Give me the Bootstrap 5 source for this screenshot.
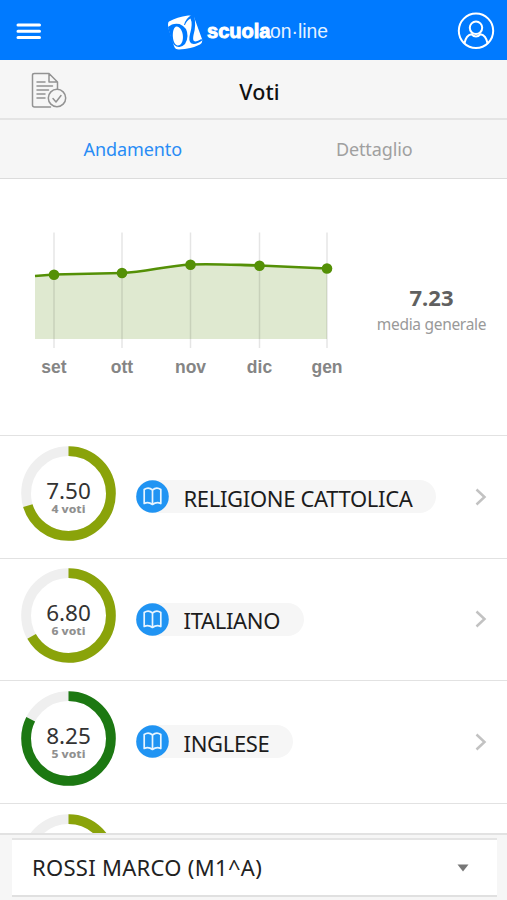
<!DOCTYPE html>
<html lang="it">
<head>
<meta charset="utf-8">
<meta name="viewport" content="width=device-width, initial-scale=1">
<title>Voti</title>
<link href="https://cdn.jsdelivr.net/npm/bootstrap@5.3.0/dist/css/bootstrap.min.css" rel="stylesheet">
<style>
  body { font-family: "Noto Sans", "Open Sans", sans-serif; color: #222; }
  svg { display: block; flex: none; }
  .app { height: 900px; }
  .topbar { height: 60px; background: #007aff; padding: 0 12px 0 16px; }
  .titlebar { height: 60px; background: #f6f6f6; border-bottom: 2px solid #e4e4e4; padding: 0 19px 0 31px; }
  .titlebar h1 { font-size: 21.5px; font-weight: 500; color: #111; letter-spacing: .1px; padding-top: 5px; }
  .side { width: 36px; }
  .tabs { height: 59px; background: #f6f6f6; border-bottom: 1px solid #dcdcdc; padding: 0 12px; font-size: 18px; letter-spacing: -.1px; }
  .tabs .nav-link { color: #a0a0a0; padding: 1px 0 0; }
  .tabs .nav-link.active { color: #288cf5; }
  .trend { height: 256px; padding-left: 20px; }
  .trend text { font: bold 17.5px "Liberation Sans", Arial, sans-serif; fill: #858585; text-anchor: middle; }
  .average { width: 151px; padding-top: 5px; }
  .average-value { font-size: 22px; font-weight: 700; line-height: 28px; color: #606060; }
  .average-label { font-size: 15.5px; line-height: 26px; color: #999; letter-spacing: -.3px; }
  .subject { height: 122.6px; border-top: 1.5px solid #e2e2e2; padding: 0 20px 0 20.5px; }
  .ring { margin-right: 20px; margin-top: -7px; }
  .ring .grade { font: 22.5px "Noto Sans", sans-serif; fill: #333; text-anchor: middle; }
  .ring .votes { font: 800 11px "Noto Sans", sans-serif; fill: #909090; text-anchor: middle; }
  .chip { height: 33px; background: #f6f6f6; padding-right: 24px; font-size: 22px; line-height: 33px; color: #1c1c1c; letter-spacing: -.33px; }
  .chip span { margin-left: 15px; padding-top: 3px; }
  .footer-select { height: 67px; background: #f6f6f6; border-top: 2px solid #e2e2e2; padding: 3px 10.5px 4px 12px; }
  .student { height: 59px; background: #fff; border-top: 2px solid #e4e4e4; border-bottom: 2px solid #e0e0e0; padding: 0 28px 0 20px; font-size: 22px; letter-spacing: .3px; }
</style>
</head>
<body>
<div class="app d-flex flex-column overflow-hidden bg-white">
  <header class="topbar d-flex align-items-center justify-content-between flex-shrink-0">
    <svg width="26" height="20" viewBox="0 0 26 20" stroke="#fff" stroke-width="3" stroke-linecap="round"><path d="M2 5H23.500M2 11.200H23.500M2 17.400H23.500"/></svg>
    <svg width="164" height="40" viewBox="0 0 164 40">
      <path d="M1 11.500Q9 7 20 5.500Q24 5 26 7L34 29Q35 33 32 34.500Q23 39 11 39.500Q7 39.500 6 36L1 20Q-1 13 1 11.500Z" fill="#fff"/>
      <path fill-rule="evenodd" d="M0 17Q5 12.500 11.500 14Q19.500 17 19.500 26Q19 35.500 11.500 37Q6 37.500 3.500 30ZM8.500 16.500C3.500 17 3.500 34 9.500 35.500C17.500 36 16.500 17 8.500 16.500Z" fill="#007aff"/>
      <path d="M16 15Q17.500 8.500 23.500 5H26Q28.500 15 25.500 25Q24.500 30 26 31Q28 32.500 33.500 29L34.200 30.500Q28 35 23.500 33.500Q20 31.500 22 24Q25 14 22.500 8.500Q18.500 10.500 17 15Z" fill="#007aff"/>
      <text x="39" y="28" textLength="63.500" lengthAdjust="spacingAndGlyphs" font-family="Liberation Sans, Arial, sans-serif" font-size="19.500" font-weight="700" fill="#fff" stroke="#fff" stroke-width=".9">scuola</text>
      <text x="102" y="28" textLength="58" lengthAdjust="spacingAndGlyphs" font-family="Liberation Sans, Arial, sans-serif" font-size="20.500" fill="#e5f2ff">on·line</text>
    </svg>
    <svg width="38" height="38" viewBox="0 0 38 38" fill="none" stroke="#fff" stroke-width="2"><g transform="translate(0 .8)"><circle cx="19" cy="19" r="17.200"/><circle cx="19" cy="16" r="6.200"/><path d="M7.500 31.500Q9 23.500 14.500 22.500Q19 27 23.500 22.500Q29 23.500 30.500 31.500"/></g></svg>
  </header>
  <div class="titlebar d-flex align-items-center justify-content-between flex-shrink-0">
    <svg class="side" height="38" viewBox="0 -1 36 38" fill="none" stroke="#939393" stroke-width="1.500" stroke-linejoin="round" stroke-linecap="round"><path d="M19.500 36H3.500Q1.500 36 1.500 34V4Q1.500 2.500 3.500 2.500H18L26.500 11V18M18 2.500V11H26.500M6 11H14M6 15H21.500M6 19H17.500M6 23H14M6 27H14"/><circle cx="26" cy="27" r="8.700"/><path d="M22 27.500L25 31L30 24.500"/></svg>
    <h1 class="mb-0">Voti</h1>
    <span class="side"></span>
  </div>
  <nav class="tabs nav nav-fill flex-nowrap align-items-center flex-shrink-0">
    <div class="col-6 text-center"><a class="nav-link active" href="#">Andamento</a></div>
    <div class="col-6 text-center"><a class="nav-link" href="#">Dettaglio</a></div>
  </nav>
  <section class="trend d-flex align-items-center flex-shrink-0">
    <svg width="336" height="170" viewBox="20 222 336 170">
      <path d="M35 276L54 274.500L122 273C145 272 166 266 190.500 264.500C214 263.500 237 265 259.500 265.500L327 268.500V339H35Z" fill="#dfe9d0"/>
      <path d="M54 232.500V348M122 232.500V348M190.500 232.500V348M259.500 232.500V348M327 232.500V348" stroke="#000" stroke-opacity=".1" stroke-width="1.500"/>
      <path d="M35 276L54 274.500L122 273C145 272 166 266 190.500 264.500C214 263.500 237 265 259.500 265.500L327 268.500" fill="none" stroke="#549006" stroke-width="2.600"/>
      <g fill="#549006"><circle cx="54" cy="274.700" r="5.300"/><circle cx="122" cy="273" r="5.300"/><circle cx="190.500" cy="264.700" r="5.300"/><circle cx="259.500" cy="265.700" r="5.300"/><circle cx="327" cy="268.500" r="5.300"/></g>
      <text x="54" y="373">set</text><text x="122" y="373">ott</text><text x="190.500" y="373">nov</text><text x="259.500" y="373">dic</text><text x="327" y="373">gen</text>
    </svg>
    <div class="average text-center">
      <div class="average-value">7.23</div>
      <div class="average-label">media generale</div>
    </div>
  </section>
  <main class="flex-grow-1 overflow-hidden">
    <div class="subject d-flex align-items-center">
      <svg class="ring" width="95" height="95" viewBox="0 0 95 95"><g fill="none" stroke-width="9.800" transform="rotate(-90 47.500 47.500)"><circle cx="47.500" cy="47.500" r="42.400" stroke="#efefef"/><circle cx="47.500" cy="47.500" r="42.400" stroke="#8aa30a" pathLength="100" stroke-dasharray="70.400 100"/></g><text class="grade" x="47.500" y="53">7.50</text><text class="votes" x="47.500" y="67" textLength="34" lengthAdjust="spacingAndGlyphs">4 voti</text></svg>
      <div class="chip rounded-pill d-flex align-items-center"><svg width="33" height="33" viewBox="0 0 33 33"><circle cx="16.500" cy="16.500" r="16.300" fill="#2094f3"/><path d="M16.500 10Q12.500 6.500 8.200 9.500V23.500Q12.500 21.500 16.500 24.500Q20.500 21.500 24.800 23.500V9.500Q20.500 6.500 16.500 10V24" fill="none" stroke="#e8f5ff" stroke-width="1.700" stroke-linejoin="round"/></svg><span>RELIGIONE CATTOLICA</span></div>
      <svg class="ms-auto" width="12" height="18" viewBox="0 0 12 18" fill="none" stroke="#c2c2c2" stroke-width="2.500"><path d="M1.500 1.500L9.500 9L1.500 16.500"/></svg>
    </div>
    <div class="subject d-flex align-items-center">
      <svg class="ring" width="95" height="95" viewBox="0 0 95 95"><g fill="none" stroke-width="9.800" transform="rotate(-90 47.500 47.500)"><circle cx="47.500" cy="47.500" r="42.400" stroke="#efefef"/><circle cx="47.500" cy="47.500" r="42.400" stroke="#8aa30a" pathLength="100" stroke-dasharray="66.800 100"/></g><text class="grade" x="47.500" y="53">6.80</text><text class="votes" x="47.500" y="67" textLength="34" lengthAdjust="spacingAndGlyphs">6 voti</text></svg>
      <div class="chip rounded-pill d-flex align-items-center"><svg width="33" height="33" viewBox="0 0 33 33"><circle cx="16.500" cy="16.500" r="16.300" fill="#2094f3"/><path d="M16.500 10Q12.500 6.500 8.200 9.500V23.500Q12.500 21.500 16.500 24.500Q20.500 21.500 24.800 23.500V9.500Q20.500 6.500 16.500 10V24" fill="none" stroke="#e8f5ff" stroke-width="1.700" stroke-linejoin="round"/></svg><span>ITALIANO</span></div>
      <svg class="ms-auto" width="12" height="18" viewBox="0 0 12 18" fill="none" stroke="#c2c2c2" stroke-width="2.500"><path d="M1.500 1.500L9.500 9L1.500 16.500"/></svg>
    </div>
    <div class="subject d-flex align-items-center">
      <svg class="ring" width="95" height="95" viewBox="0 0 95 95"><g fill="none" stroke-width="9.800" transform="rotate(-90 47.500 47.500)"><circle cx="47.500" cy="47.500" r="42.400" stroke="#efefef"/><circle cx="47.500" cy="47.500" r="42.400" stroke="#1c7812" pathLength="100" stroke-dasharray="82.500 100"/></g><text class="grade" x="47.500" y="53">8.25</text><text class="votes" x="47.500" y="67" textLength="34" lengthAdjust="spacingAndGlyphs">5 voti</text></svg>
      <div class="chip rounded-pill d-flex align-items-center"><svg width="33" height="33" viewBox="0 0 33 33"><circle cx="16.500" cy="16.500" r="16.300" fill="#2094f3"/><path d="M16.500 10Q12.500 6.500 8.200 9.500V23.500Q12.500 21.500 16.500 24.500Q20.500 21.500 24.800 23.500V9.500Q20.500 6.500 16.500 10V24" fill="none" stroke="#e8f5ff" stroke-width="1.700" stroke-linejoin="round"/></svg><span>INGLESE</span></div>
      <svg class="ms-auto" width="12" height="18" viewBox="0 0 12 18" fill="none" stroke="#c2c2c2" stroke-width="2.500"><path d="M1.500 1.500L9.500 9L1.500 16.500"/></svg>
    </div>
    <div class="subject d-flex align-items-center">
      <svg class="ring" width="95" height="95" viewBox="0 0 95 95"><g fill="none" stroke-width="9.800" transform="rotate(-90 47.500 47.500)"><circle cx="47.500" cy="47.500" r="42.400" stroke="#efefef"/><circle cx="47.500" cy="47.500" r="42.400" stroke="#8aa30a" pathLength="100" stroke-dasharray="70 100"/></g></svg>
    </div>
  </main>
  <footer class="footer-select flex-shrink-0">
    <div class="student d-flex align-items-center justify-content-between">
      <span>ROSSI MARCO (M1^A)</span>
      <svg width="12" height="8" viewBox="0 0 12 8"><path d="M.5 .5H11.500L6 7.500Z" fill="#777"/></svg>
    </div>
  </footer>
</div>
<script src="https://cdn.jsdelivr.net/npm/bootstrap@5.3.0/dist/js/bootstrap.bundle.min.js"></script>
</body>
</html>
